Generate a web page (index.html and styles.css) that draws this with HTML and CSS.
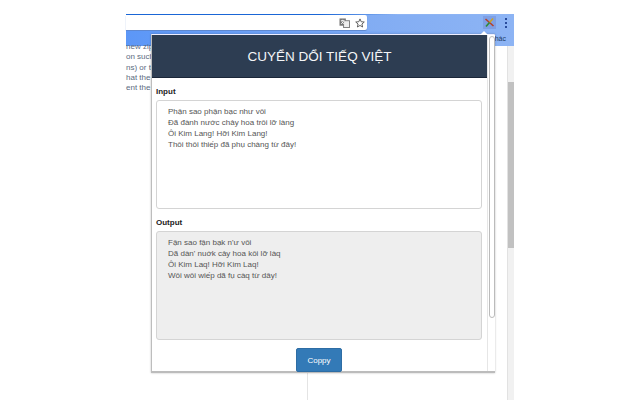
FILE: index.html
```html
<!DOCTYPE html>
<html lang="vi">
<head>
<meta charset="utf-8">
<title>Chuyển đổi tiếng Việt</title>
<link rel="stylesheet" href="styles.css">
</head>
<body>
<div class="browser">
  <div class="toolbar">
    <div class="omnibox">
      <svg class="icon" width="11" height="10" viewBox="0 0 12 11"><rect x="0.5" y="0.5" width="7" height="8" fill="#777"/><rect x="5" y="3" width="6.5" height="7.5" fill="#eee" stroke="#777"/><path d="M2 3h4M4 2v1M2.5 6.5 5 3.5M3 4l2.5 2.5" stroke="#fff" fill="none"/></svg>
      <svg class="icon" width="10" height="10" viewBox="0 0 11 11"><path d="M5.500 1 6.800 4.100 10.200 4.400 7.600 6.600 8.400 9.900 5.500 8.200 2.600 9.900 3.400 6.600 0.800 4.400 4.200 4.100Z" fill="none" stroke="#555" stroke-width="1"/></svg>
    </div>
    <div class="ext">
      <svg width="11" height="11" viewBox="0 0 11 11"><path d="M1.500 2 9.500 9" stroke="#b5402a" stroke-width="1.600"/><path d="M9 1.500 5.500 5.500" stroke="#c9a227" stroke-width="1.600"/><path d="M2 9.500 5.500 5.500" stroke="#2e8b3a" stroke-width="1.600"/></svg>
    </div>
    <div class="menu"><i></i><i></i><i></i></div>
  </div>
  <div class="bookmarks"><span class="bm">khác</span></div>
  <div class="page">
    <div class="doc">
      <p>new zip</p>
      <p>on such</p>
      <p>ns) or to</p>
      <p>hat the</p>
      <p>ent the</p>
    </div>
    <div class="rule"></div>
    <div class="scroll"><div class="thumb"></div></div>
  </div>

  <div class="popup">
    <header class="title">CUYỂN DỔI TIẾQ VIỆT</header>
    <main class="body">
      <label class="label">Input</label>
      <div class="box"><p>Phận sao phận bạc như vôi</p><p>Đã đành nước chảy hoa trôi lỡ làng</p><p>Ôi Kim Lang! Hỡi Kim Lang!</p><p>Thôi thôi thiếp đã phụ chàng từ đây!</p></div>
      <label class="label">Output</label>
      <div class="box out"><p>Fận sao fận bạk n'ư vôi</p><p>Dã dàn' nuớk cảy hoa kôi lỡ làq</p><p>Ôi Kim Laq! Hỡi Kim Laq!</p><p>Wôi wôi wiếp dã fụ càq từ dây!</p></div>
      <div class="actions"><button class="copy">Coppy</button></div>
    </main>
    <div class="pscroll"><div class="pthumb"></div></div>
  </div>
</div>
</body>
</html>
```
FILE: styles.css
```css
* { box-sizing: border-box; }
html, body { margin: 0; height: 100%; background: #fff; overflow: hidden; }
body { padding-left: 126px; font-family: "Liberation Sans", Arial, sans-serif; color: #333; }
.browser { width: 388px; height: 400px; padding-top: 14px; display: flex; flex-direction: column; }
.toolbar { height: 17px; display: flex; align-items: flex-start; border-top: 1px solid; border-image: linear-gradient(90deg, #1a66d6 0%, #1a66d6 50%, #8db4f4 70%) 1; background: linear-gradient(90deg, #6fa0f2 0%, #8db4f4 100%); padding-right: 7px; }
.omnibox { width: 241px; height: 15px; background: #fff; border-radius: 0 2px 2px 0; display: flex; align-items: center; justify-content: flex-end; gap: 5px; padding-right: 2px; box-shadow: 0 1px 1px #5d86cc; }
.icon { display: block; }
.ext { margin-left: auto; width: 13px; height: 13px; margin-top: 1px; background: #7e9fe4; display: flex; align-items: center; justify-content: center; }
.menu { margin-left: 9px; margin-top: 3px; width: 2px; display: flex; flex-direction: column; gap: 2px; }
.menu i { display: block; width: 2px; height: 2px; background: #2a4c9c; }
.bookmarks { height: 15px; background: linear-gradient(90deg, #5c97f7 0%, #8db4f4 100%); display: flex; justify-content: flex-end; font-size: 7px; line-height: 15px; color: #1d3a66; }
.bm { margin-right: 8px; }
.page { flex: 1; display: flex; position: relative; }
.doc { width: 181px; margin-top: -4px; font-size: 8px; line-height: 10.300px; color: #5b6b80; }
.doc p { margin: 0; white-space: nowrap; }
.rule { width: 1px; height: 100%; background: #e4e4e4; }
.scroll { margin-left: auto; width: 7px; background: #f1f1f1; border-left: 1px solid #e2e2e2; }
.thumb { margin-top: 36px; height: 166px; background: #c1c1c1; }
.popup { position: absolute; left: 151px; top: 34px; width: 344px; height: 339px; background: #fff; border: 1px solid #bdbdbd; border-bottom: 2px solid #bcbcbc; border-top: 1px solid #eef; box-shadow: 0 0 2px rgba(0,0,0,.25); display: flex; overflow: visible; }
.popup::before { content: ""; position: absolute; right: 6px; top: -4px; width: 0; height: 0; border: 4px solid transparent; border-top: 0; border-bottom-color: #fff; }
.title { position: absolute; left: 0; top: 0; width: 335px; height: 43px; background: #2d3d52; border-bottom: 1px solid #1a2638; color: #f4f6f8; font-size: 13.500px; line-height: 43px; text-align: center; }
.body { width: 335px; padding: 44px 5px 0 4px; display: flex; flex-direction: column; }
.label { display: block; margin-top: 8px; font-size: 8px; font-weight: 700; line-height: 10px; color: #222; }
.box { margin-top: 3px; height: 109px; width: 326px; border: 1px solid #d4d4d4; border-radius: 3px; padding: 5px 11px; font-size: 8px; line-height: 11px; color: #555; background: #fff; flex: none; }
.box p { margin: 0; white-space: nowrap; }
.label + .out { margin-top: 3px; background: #eee; }
.box + .label { margin-top: 9px; }
.actions { display: flex; justify-content: center; margin-top: 8px; }
.copy { width: 46px; height: 24px; padding: 0; border: 1px solid #2e6da4; border-radius: 2px; background: #337ab7; color: #fff; font: 8px "Liberation Sans", Arial, sans-serif; }
.pscroll { width: 8px; margin-left: auto; background: #fff; border-left: 1px solid #e6e6e6; padding-left: 1px; }
.pthumb { height: 282px; margin-top: 1px; width: 6px; background: #fff; border: 1px solid #bbb; border-radius: 3px; }
```
